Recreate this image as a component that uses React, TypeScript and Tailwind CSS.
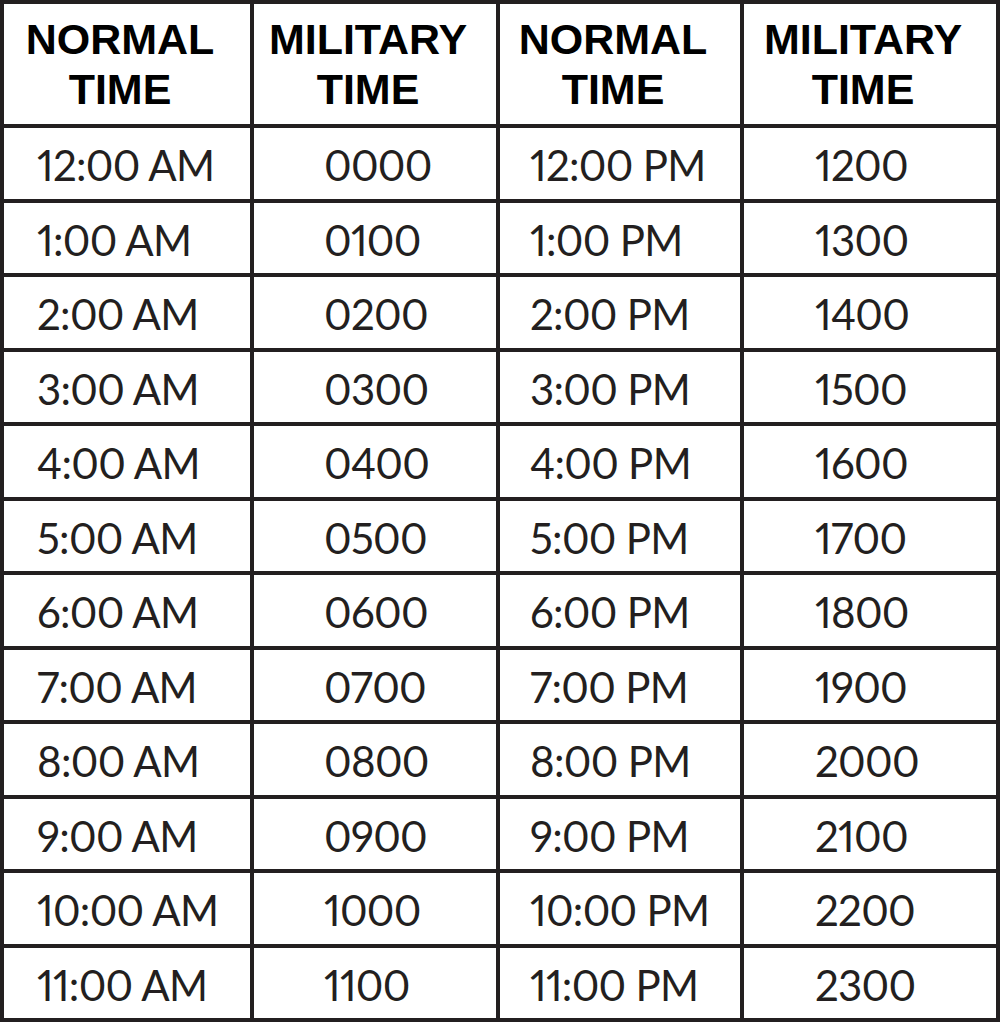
const ROWS: [string, string, string, string][] = [
  ["12:00 AM", "0000", "12:00 PM", "1200"],
  ["1:00 AM", "0100", "1:00 PM", "1300"],
  ["2:00 AM", "0200", "2:00 PM", "1400"],
  ["3:00 AM", "0300", "3:00 PM", "1500"],
  ["4:00 AM", "0400", "4:00 PM", "1600"],
  ["5:00 AM", "0500", "5:00 PM", "1700"],
  ["6:00 AM", "0600", "6:00 PM", "1800"],
  ["7:00 AM", "0700", "7:00 PM", "1900"],
  ["8:00 AM", "0800", "8:00 PM", "2000"],
  ["9:00 AM", "0900", "9:00 PM", "2100"],
  ["10:00 AM", "1000", "10:00 PM", "2200"],
  ["11:00 AM", "1100", "11:00 PM", "2300"],
]

const HEADERS = [
  ["NORMAL", "TIME"],
  ["MILITARY", "TIME"],
  ["NORMAL", "TIME"],
  ["MILITARY", "TIME"],
]

// padding izquierdo de cada columna (texto alineado a la izquierda)
const PAD = ["pl-[33px]", "pl-[70px]", "pl-[30px]", "pl-[71px]"]

export default function App() {
  return (
    <div className="min-h-screen bg-white">
      <div className="grid h-[1022px] w-[1000px] grid-cols-[246px_242px_240px_252px] grid-rows-[120px_repeat(12,1fr)] gap-[4px] bg-[#231f20] p-[4px]">
        {HEADERS.map((h, i) => (
          <div
            key={i}
            className="flex flex-col items-center justify-center bg-white pr-[14px] text-[43px] font-bold leading-[50px] text-black"
            style={{ fontFamily: '"Liberation Sans", Arial, sans-serif' }}
          >
            <span>{h[0]}</span>
            <span>{h[1]}</span>
          </div>
        ))}
        {ROWS.map((row, r) =>
          row.map((cell, c) => (
            <div
              key={`${r}-${c}`}
              className={`flex items-center bg-white pt-[4px] text-[42px] leading-none tracking-[-0.7px] text-[#231f20] proportional-nums ${PAD[c]}`}
              style={{ fontFamily: 'Lato, "Noto Sans", sans-serif' }}
            >
              {cell}
            </div>
          ))
        )}
      </div>
    </div>
  )
}
